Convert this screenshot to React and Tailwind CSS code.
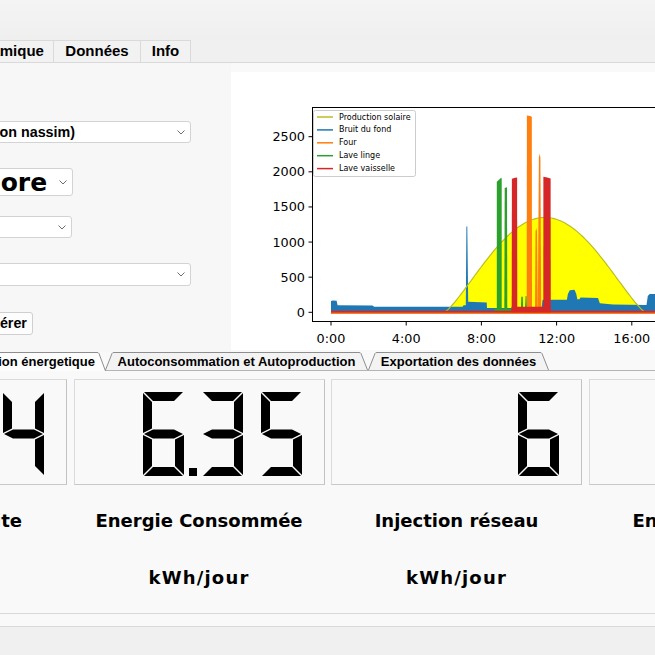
import React from 'react';

// axes mapping (page coordinates, the svg viewBox starts at 231,72)
const X = (t) => 331 + 18.8 * t;
const Y = (v) => 312.3 - 0.07024 * v;
const pts = (arr) => arr.map(([t, v]) => `${X(t).toFixed(1)},${Y(v).toFixed(1)}`).join(' ');

const solar = [];
for (let i = 0; i <= 100; i++) {
  const t = 6.05 + (10.65 * i) / 100;
  const s = Math.max(0, Math.sin((Math.PI * (t - 6.05)) / 10.65));
  solar.push([t, 1350 * Math.pow(s, 1.2)]);
}

const blue = [
  [0, 0], [0, 160], [0.1, 170], [0.3, 165], [0.35, 100], [2.2, 95], [2.3, 80], [7.0, 80],
  [7.05, 100], [7.17, 100], [7.2, 1220], [7.25, 1220], [7.3, 150], [8.28, 140], [8.3, 60],
  [11.2, 60], [11.25, 180], [12.55, 180], [12.6, 260], [12.7, 315], [12.95, 320], [13.05, 260],
  [13.1, 185], [13.22, 185], [13.27, 210], [14.2, 205], [14.3, 130], [15, 110], [16.78, 105],
  [16.85, 230], [16.95, 260], [18, 260], [18, 0],
];

const greens = [
  [[8.7, 0], [8.7, 50], [9.7, 50], [9.75, 200], [9.8, 50], [10.1, 50], [10.12, 220], [10.2, 220], [10.22, 50], [10.32, 50], [10.35, 230], [10.4, 230], [10.42, 50], [11.7, 50], [11.7, 0]],
  [[8.82, 0], [8.82, 1860], [8.95, 1890], [9.05, 1915], [9.08, 1905], [9.08, 0]],
  [[9.22, 0], [9.24, 1770], [9.36, 1780], [9.38, 0]],
];

const reds = [
  [[9.6, 0], [9.6, 80], [11.7, 80], [11.7, 0]],
  [[9.61, 0], [9.62, 1900], [9.8, 1915], [9.9, 1920], [9.91, 0]],
  [[11.29, 0], [11.3, 1930], [11.5, 1920], [11.68, 1905], [11.69, 0]],
];

const oranges = [
  [[10.4, 0], [10.4, 40], [11.3, 40], [11.3, 0]],
  [[10.41, 0], [10.42, 2800], [10.6, 2795], [10.68, 2780], [10.69, 0]],
  [[10.85, 0], [10.88, 1150], [10.92, 1200], [10.96, 1150], [11.0, 0]],
  [[11.0, 0], [11.06, 2200], [11.1, 2260], [11.14, 2200], [11.18, 0]],
];

const legend = [
  ['#bcbd22', 'Production solaire'],
  ['#1f77b4', 'Bruit du fond'],
  ['#ff7f0e', 'Four'],
  ['#2ca02c', 'Lave linge'],
  ['#d62728', 'Lave vaisselle'],
];

function Chart() {
  return (
    <svg width="424" height="278" viewBox="231 72 424 278" className="block font-['DejaVu_Sans',sans-serif]">
      <polygon points={pts([[6.05, 0], ...solar, [16.7, 0]])} fill="#ffff00" />
      <polygon points={pts(blue)} fill="#1f77b4" />
      <polyline points={pts(solar)} fill="none" stroke="#bcbd22" strokeWidth="1.2" />
      {oranges.map((p, i) => <polygon key={'o' + i} points={pts(p)} fill="#ff7f0e" />)}
      {greens.map((p, i) => <polygon key={'g' + i} points={pts(p)} fill="#2ca02c" />)}
      {reds.map((p, i) => <polygon key={'r' + i} points={pts(p)} fill="#d62728" />)}
      <line x1={X(0)} x2="660" y1="313.3" y2="313.3" stroke="#ff7f0e" strokeWidth="1.5" />
      <line x1={X(0)} x2="660" y1="311.7" y2="311.7" stroke="#d62728" strokeWidth="2" />

      {/* spines */}
      <line x1="312.5" x2="312.5" y1="107" y2="322" stroke="#000" strokeWidth="1" />
      <line x1="312" x2="660" y1="107.5" y2="107.5" stroke="#000" strokeWidth="1" />
      <line x1="312" x2="660" y1="321.5" y2="321.5" stroke="#000" strokeWidth="1" />

      {[0, 500, 1000, 1500, 2000, 2500].map((v) => (
        <g key={v}>
          <line x1="308.5" x2="312.5" y1={Y(v)} y2={Y(v)} stroke="#000" strokeWidth="1" />
          <text x="305" y={Y(v)} textAnchor="end" dominantBaseline="central" fontSize="12.8" fill="#000">
            {v}
          </text>
        </g>
      ))}
      {[0, 4, 8, 12, 16].map((t) => (
        <g key={t}>
          <line x1={X(t)} x2={X(t)} y1="321.5" y2="325.5" stroke="#000" strokeWidth="1" />
          <text x={X(t)} y="338" textAnchor="middle" dominantBaseline="central" fontSize="12.8" fill="#000">
            {t}:00
          </text>
        </g>
      ))}

      <rect x="313.5" y="110.5" width="102" height="66" rx="2" fill="#fff" fillOpacity="0.8" stroke="#cccccc" />
      {legend.map(([c, label], i) => (
        <g key={label}>
          <line x1="317" x2="333" y1={117 + 12.9 * i} y2={117 + 12.9 * i} stroke={c} strokeWidth="1.5" />
          <text x="339" y={117 + 12.9 * i} dominantBaseline="central" fontSize="8" fill="#000">
            {label}
          </text>
        </g>
      ))}
    </svg>
  );
}

const Chevron = () => (
  <svg width="8" height="5" viewBox="0 0 8 5" className="shrink-0">
    <polyline points="0.5,0.5 4,4 7.5,0.5" fill="none" stroke="#6e6e6e" strokeWidth="1" />
  </svg>
);

const Combo = ({ className, text, textClass }) => (
  <div className={`flex items-center justify-between pl-1 pr-[5px] bg-white border border-[#d3d3d3] rounded-[3px] ${className}`}>
    <span className={`whitespace-nowrap font-bold leading-none ${textClass || ''}`}>{text}</span>
    <Chevron />
  </div>
);

// seven segment digit, Qt filled style
const SEG = {
  a: '1,0 40,0 31,9 10,9',
  b: '41,1 41,41 32,36.5 32,10',
  c: '41,43 41,83 32,74 32,47.5',
  d: '1,84 10,75 31,75 40,84',
  e: '0,43 9,47.5 9,74 0,83',
  f: '0,1 9,10 9,36.5 0,41',
  g: '1,42 10,37.5 31,37.5 40,42 31,46.5 10,46.5',
};
const DIGITS = {
  0: 'abcdef', 1: 'bc', 2: 'abged', 3: 'abgcd', 4: 'fgbc',
  5: 'afgcd', 6: 'afgedc', 7: 'abc', 8: 'abcdefg', 9: 'abcdfg',
};

const Digit = ({ ch }) => (
  <svg width="41" height="84" viewBox="0 0 41 84" className="shrink-0">
    {DIGITS[ch].split('').map((s) => (
      <polygon key={s} points={SEG[s]} fill="#000" />
    ))}
  </svg>
);

function Lcd({ value }) {
  const parts = [];
  let prevDigit = false;
  value.split('').forEach((ch, i) => {
    if (ch === '.') {
      parts.push(
        <div key={i} className="w-[18px] h-[84px] flex items-end justify-center shrink-0">
          <div className="w-[8px] h-[8px] bg-black" />
        </div>
      );
      prevDigit = false;
    } else {
      if (prevDigit) parts.push(<div key={'s' + i} className="w-[18px] shrink-0" />);
      parts.push(<Digit key={i} ch={ch} />);
      prevDigit = true;
    }
  });
  return (
    <div className="h-[106px] border border-[#dadada] border-r-[#c2c2c2] border-b-[#c8c8c8] bg-[#f9f9f9] flex justify-end items-start pt-[12px] pr-[22px] overflow-hidden">
      {parts}
    </div>
  );
}

const TabShape = ({ w, selected }) => (
  <svg width={w} height={selected ? 19 : 18} viewBox={`0 0 ${w} ${selected ? 19 : 18}`} className="absolute left-0 top-0">
    <path
      d={`M0.5,${selected ? 19 : 18} L7,1.5 Q7.5,0.5 9,0.5 L${w - 9},0.5 Q${w - 7.5},0.5 ${w - 7},1.5 L${w - 0.5},${selected ? 19 : 18}`}
      fill={selected ? '#fdfdfd' : '#f3f3f3'}
      stroke="#8e8e8e"
      strokeWidth="1"
    />
  </svg>
);

const LowerTab = ({ w, label, selected, className }) => (
  <div className={`relative shrink-0 flex items-center justify-center ${selected ? 'h-[19px] z-10' : 'h-[18px]'} ${className || ''}`} style={{ width: w }}>
    <TabShape w={w} selected={selected} />
    <span className={`relative whitespace-nowrap font-bold text-[13px] leading-none ${selected ? 'mb-[1px]' : ''}`}>{label}</span>
  </div>
);

const labelCls = "font-['DejaVu_Sans',sans-serif] font-bold text-[18px] leading-[22px] whitespace-nowrap";

export default function App() {
  return (
    <div className="w-[655px] h-[655px] overflow-hidden bg-[#f0f0f0] font-['Liberation_Sans',Arial,sans-serif] text-black">
      <div className="h-[40px] bg-gradient-to-b from-[#f4f4f4] to-[#efefef]" />

      {/* main tabs */}
      <div className="h-[22px] flex ml-[-46px]">
        {[
          ['Dynamique', 'w-[100px]'],
          ['Données', 'w-[87px]'],
          ['Info', 'w-[50px]'],
        ].map(([label, w]) => (
          <div key={label} className={`${w} h-full flex items-center justify-center bg-[#f2f2f2] border-t border-r border-[#dadada] font-bold text-[15px] whitespace-nowrap`}>
            {label}
          </div>
        ))}
      </div>

      <div className="h-[565px] border-y border-[#d9d9d9] bg-[#f9f9f9] flex flex-col">
        {/* upper area: settings + chart */}
        <div className="h-[289px] flex shrink-0">
          <div className="w-[231px] shrink-0 pt-[58px] bg-[#f7f7f7]">
            <div className="ml-[-42px] flex flex-col items-start">
              <Combo className="w-[233px] h-[22px]" text="(Maison nassim)" textClass="text-[14.3px]" />
              <Combo
                className="w-[115px] h-[28px] mt-[25px]"
                text="Encore"
                textClass="ml-[-12px] text-[25px] font-['DejaVu_Sans',sans-serif]"
              />
              <Combo className="w-[114px] h-[22px] mt-[20px]" text="" />
              <Combo className="w-[233px] h-[23px] mt-[25px]" text="" />
              <button className="ml-[8px] mt-[26px] w-[67px] h-[23px] bg-[#fdfdfd] border border-[#cfcfcf] rounded-[3px] font-bold text-[14.3px] leading-none whitespace-nowrap">
                Générer
              </button>
            </div>
          </div>
          <div className="flex-1 mt-[9px] h-[278px] bg-white overflow-hidden">
            <Chart />
          </div>
        </div>

        {/* lower tab widget */}
        <div className="h-[18px] flex items-start ml-[-62px] shrink-0">
          <LowerTab w={168} label="Production énergetique" selected />
          <LowerTab w={263} label="Autoconsommation et Autoproduction" className="ml-[-1px]" />
          <LowerTab w={181} label="Exportation des données" />
        </div>
        <div className="h-[244px] shrink-0 border-t border-t-[#b4b4b4] border-b border-b-[#d9d9d9] bg-[#f9f9f9] overflow-hidden">
          <div className="ml-[-184px] mt-[8px] grid grid-cols-[repeat(4,251px)] gap-x-[6.5px]">
            <Lcd value="7.4" />
            <Lcd value="6.35" />
            <Lcd value="6" />
            <Lcd value="9" />

            <div className={`${labelCls} mt-[25px] text-right pr-[45px]`}>Energie Produite</div>
            <div className={`${labelCls} mt-[25px] text-center`}>Energie Consommée</div>
            <div className={`${labelCls} mt-[25px] text-center`}>Injection réseau</div>
            <div className={`${labelCls} mt-[25px] text-left pl-[44px]`}>Energie Achetée</div>

            <div className={`${labelCls} mt-[35px] text-center tracking-[1.2px]`}>kWh/jour</div>
            <div className={`${labelCls} mt-[35px] text-center tracking-[1.2px]`}>kWh/jour</div>
            <div className={`${labelCls} mt-[35px] text-center tracking-[1.2px]`}>kWh/jour</div>
            <div className={`${labelCls} mt-[35px] text-center tracking-[1.2px]`}>kWh/jour</div>
          </div>
        </div>
      </div>
    </div>
  );
}
